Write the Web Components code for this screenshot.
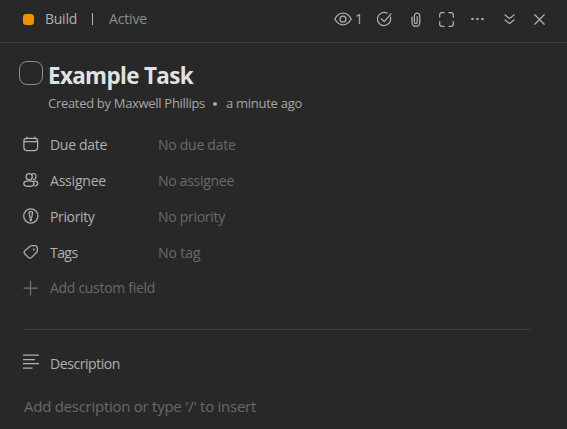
<!DOCTYPE html>
<html lang="en">
<head>
<meta charset="utf-8">
<title>Example Task</title>
<style>
html,body{margin:0;height:100%;background:#282828;overflow:hidden}
body{font-family:"Open Sans","Noto Sans",sans-serif;font-size:14px;color:#b0b0b0}
</style>
</head>
<body>
<task-panel></task-panel>
<script>
const icons = {
  eye:'<path d="M.8 8Q4 2.2 9 2.2T17.2 8Q14 13.8 9 13.8T.8 8Z"/><circle cx="9" cy="8" r="3"/>',
  check:'<path d="M13.4 6.2A6.6 6.6 0 1 1 10.2 2.2M4.3 7.8l2.9 2.8 6.8-7.8"/>',
  clip:'<path d="M1 5v5.5a3.8 3.8 0 0 0 7.8 0V3.8a2.7 2.7 0 0 0-5.4 0v6.4a1.4 1.4 0 0 0 2.8 0V4.6"/>',
  expand:'<path d="M.7 5V3Q.7.7 3 .7h2M10 .7h2q2.3 0 2.3 2.3v2M14.3 9.5V12q0 2.3-2.3 2.3h-2M5 14.3H3Q.7 14.3.7 12V9.5"/>',
  dots:'<g fill="currentColor" stroke="none"><rect x=".3" y="1" width="2.3" height="2" rx=".5"/><rect x="5.3" y="1" width="2.3" height="2" rx=".5"/><rect x="10.3" y="1" width="2.3" height="2" rx=".5"/></g>',
  down:'<path d="M1 1l4.5 3.4L10 1M1 6l4.5 3.4L10 6"/>',
  close:'<path d="M.8.8l9.4 9.4M10.2.8L.8 10.2"/>',
  calendar:'<path d="M1 5.5h13.5M3.7 1v1.6M11.9 1v1.6M3.6 2.4h8.3q2.7 0 2.7 2.7v6.5q0 2.9-2.9 2.9H3.8Q.9 14.5.9 11.6V5.1q0-2.7 2.7-2.7Z"/>',
  people:'<circle cx="6.2" cy="4.7" r="3.1"/><path d="M.8 11.8Q.8 9.2 3.5 9.2h4.7q2.8 0 2.8 2.6 0 2.6-5.1 2.6T.8 11.8ZM9.3 1.8q3.7-.8 3.7 2.7 0 2.6-2.5 3.1M11.2 9.1h1.1q2.4.2 2.4 2.4 0 2.1-2.6 2.4"/>',
  priority:'<circle cx="7.8" cy="8" r="7.1"/><path d="M6 4.3Q7.8 2.8 9.6 4.3L8.6 9.8H7Z"/><circle cx="7.8" cy="12" r=".7"/>',
  tag:'<path d="M8.9 1.7l2.6-.1q2.9 0 2.9 2.9v2q0 1.2-.9 2l-4.9 4.9q-1.6 1.6-3.2 0L1.9 10q-1.6-1.6 0-3.2l4.9-4.3q.9-.8 2.1-.8Z"/><circle cx="10.8" cy="5.4" r=".4"/>',
  plus:'<path d="M7.5 1v14M1 8h13.5"/>',
  lines:'<path d="M0 1h15.5M0 5.5h11.5M0 9.5h15.5M0 14h9"/>'
};
class UiIcon extends HTMLElement {
  connectedCallback(){
    const w=this.getAttribute('w'), h=this.getAttribute('h');
    this.attachShadow({mode:'open'}).innerHTML=`<style>:host{display:block;flex:none;color:#b0b0b0}svg{display:block;fill:none;stroke:currentColor;stroke-width:1.25;stroke-linecap:round;stroke-linejoin:round}</style><svg width="${w}" height="${h}" viewBox="0 0 ${w} ${h}">${icons[this.getAttribute('name')]}</svg>`;
  }
}
customElements.define('ui-icon',UiIcon);

/* Single-line label whose tracking is adjusted to fill its advance width. */
class FitText extends HTMLElement {
  connectedCallback(){
    const root=this.attachShadow({mode:'open'});
    root.innerHTML='<style>:host{display:block;flex:none;white-space:pre;line-height:20px}span{display:inline-block}</style><span><slot></slot></span>';
    const span=root.querySelector('span'), w=+this.getAttribute('w');
    const natural=span.getBoundingClientRect().width;
    span.style.letterSpacing=(w-natural)/this.textContent.length+'px';
  }
}
customElements.define('fit-text',FitText);

class PanelHeader extends HTMLElement {
  connectedCallback(){
    this.attachShadow({mode:'open'}).innerHTML=`<style>
:host{display:flex;justify-content:space-between;box-sizing:border-box;height:43px;padding:0 21px 4px 23px;border-bottom:1px solid #3d3d3d}
.crumb,.tools{display:flex;align-items:center}
.dot{width:11px;height:11px;border-radius:3px;background:#f29100;margin-right:11px}
.bar{width:1px;height:12px;background:#b0b0b0;margin:0 16px 0 15px}
.status{color:#8d8d8d}
</style>
<div class="crumb"><div class="dot"></div><fit-text w="32">Build</fit-text><div class="bar"></div><fit-text class="status" w="38">Active</fit-text></div>
<div class="tools">
<ui-icon name="eye" w="18" h="16"></ui-icon><fit-text w="7" style="margin:0 15px 0 3px">1</fit-text>
<ui-icon name="check" w="15" h="16" style="margin-right:19px"></ui-icon>
<ui-icon name="clip" w="10" h="15" style="margin-right:18px"></ui-icon>
<ui-icon name="expand" w="15" h="15" style="margin-right:17px"></ui-icon>
<ui-icon name="dots" w="13" h="4" style="margin-right:20px"></ui-icon>
<ui-icon name="down" w="11" h="10" style="margin-right:19px"></ui-icon>
<ui-icon name="close" w="11" h="11" style="margin-right:1px"></ui-icon>
</div>`;
  }
}
customElements.define('panel-header',PanelHeader);

class TaskTitle extends HTMLElement {
  connectedCallback(){
    this.attachShadow({mode:'open'}).innerHTML=`<style>
:host{display:grid;grid-template-columns:24px 1fr;column-gap:5px;padding:18px 0 0 19px;height:66px}
.box{box-sizing:border-box;width:24px;height:24px;border:1px solid #8e8e8e;border-radius:8px}
.title{font-weight:700;font-size:22.4px;line-height:30px;color:#e2e2e2}
.meta{display:flex;font-size:13px;color:#a6a6a6;margin-top:2px}
.meta i{width:4px;height:4px;border-radius:50%;background:#a6a6a6;margin:9px 9px 0 8px}
</style>
<div class="box"></div><div><fit-text class="title" w="145">Example Task</fit-text>
<div class="meta"><fit-text w="157">Created by Maxwell Phillips</fit-text><i></i><fit-text w="76">a minute ago</fit-text></div></div>`;
  }
}
customElements.define('task-title',TaskTitle);

class FieldRow extends HTMLElement {
  connectedCallback(){
    const a=n=>this.getAttribute(n);
    this.attachShadow({mode:'open'}).innerHTML=`<style>
:host{display:grid;grid-template-columns:27px 108px 1fr;align-items:center;height:36px;padding-left:23px}
.value{color:#686868}
ui-icon{margin-bottom:2px}
</style><ui-icon name="${a('icon')}" w="16" h="16"></ui-icon><fit-text w="${a('lw')}">${a('label')}</fit-text><fit-text class="value" w="${a('vw')}">${a('value')}</fit-text>`;
  }
}
customElements.define('field-row',FieldRow);

class TaskPanel extends HTMLElement {
  connectedCallback(){
    this.attachShadow({mode:'open'}).innerHTML=`<style>
:host{display:flex;flex-direction:column;width:567px;height:429px}
.add{display:flex;align-items:center;height:34px;padding-left:23px;gap:11px;color:#686868}
.add ui-icon{color:#777}
hr{width:508px;height:1px;border:0;background:#3d3d3d;margin:24px 0 24px 23px}
.desc{display:flex;padding-left:23px;gap:11px}
.place{font-size:15px;color:#686868;margin:22px 0 0 24px}
</style>
<panel-header></panel-header><task-title></task-title>
<field-row icon="calendar" label="Due date" lw="57" value="No due date" vw="77.5"></field-row>
<field-row icon="people" label="Assignee" lw="56" value="No assignee" vw="76"></field-row>
<field-row icon="priority" label="Priority" lw="44.5" value="No priority" vw="67"></field-row>
<field-row icon="tag" label="Tags" lw="27.5" value="No tag" vw="42.5"></field-row>
<div class="add"><ui-icon name="plus" w="16" h="16"></ui-icon><fit-text w="105">Add custom field</fit-text></div>
<hr>
<div class="desc"><ui-icon name="lines" w="16" h="15"></ui-icon><fit-text w="70">Description</fit-text></div>
<fit-text class="place" w="232">Add description or type '/' to insert</fit-text>`;
  }
}
customElements.define('task-panel',TaskPanel);
</script>
</body>
</html>
